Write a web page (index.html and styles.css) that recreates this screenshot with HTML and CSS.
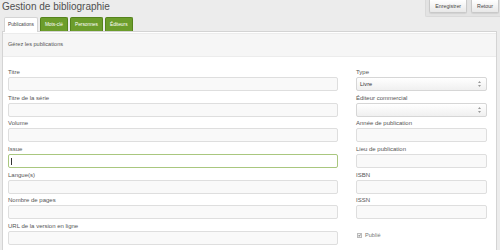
FILE: index.html
```
<!DOCTYPE html>
<html lang="fr">
<head>
    <meta charset="UTF-8">
    <title>Gestion de bibliographie</title>
    <link rel="stylesheet" href="styles.css">
</head>
<body>

    <div class="top-bar">
        <h1>Gestion de bibliographie</h1>
        <div class="actions">
            <button type="button" class="btn">Enregistrer</button>
            <button type="button" class="btn">Retour</button>
        </div>
    </div>

    <ul class="tabs">
        <li class="tab active">Publications</li>
        <li class="tab">Mots-clé</li>
        <li class="tab">Personnes</li>
        <li class="tab">Éditeurs</li>
    </ul>

    <div class="panel">
        <div class="panel-head">Gérez les publications</div>

        <form class="pub-form">
            <div class="col">
                <div class="field">
                    <label for="titre">Titre</label>
                    <input type="text" id="titre" class="form-control">
                </div>
                <div class="field">
                    <label for="serie">Titre de la série</label>
                    <input type="text" id="serie" class="form-control">
                </div>
                <div class="field">
                    <label for="volume">Volume</label>
                    <input type="text" id="volume" class="form-control">
                </div>
                <div class="field">
                    <label for="issue">Issue</label>
                    <div class="form-control focused"><span class="caret"></span></div>
                </div>
                <div class="field">
                    <label for="langues">Langue(s)</label>
                    <input type="text" id="langues" class="form-control">
                </div>
                <div class="field">
                    <label for="pages">Nombre de pages</label>
                    <input type="text" id="pages" class="form-control">
                </div>
                <div class="field">
                    <label for="url">URL de la version en ligne</label>
                    <input type="text" id="url" class="form-control">
                </div>
                <div class="field">
                    <label for="doi">DOI</label>
                    <input type="text" id="doi" class="form-control">
                </div>
            </div>

            <div class="col">
                <div class="field">
                    <label>Type</label>
                    <div class="select">
                        <span>Livre</span>
                        <svg class="arrows" width="3" height="6" viewBox="0 0 3 6"><path d="M1.5 0 L3 2 L0 2 Z M1.5 6 L3 4 L0 4 Z" fill="#999"/></svg>
                    </div>
                </div>
                <div class="field">
                    <label>Éditeur commercial</label>
                    <div class="select">
                        <span></span>
                        <svg class="arrows" width="3" height="6" viewBox="0 0 3 6"><path d="M1.5 0 L3 2 L0 2 Z M1.5 6 L3 4 L0 4 Z" fill="#999"/></svg>
                    </div>
                </div>
                <div class="field">
                    <label for="annee">Année de publication</label>
                    <input type="text" id="annee" class="form-control">
                </div>
                <div class="field">
                    <label for="lieu">Lieu de publication</label>
                    <input type="text" id="lieu" class="form-control">
                </div>
                <div class="field">
                    <label for="isbn">ISBN</label>
                    <input type="text" id="isbn" class="form-control">
                </div>
                <div class="field">
                    <label for="issn">ISSN</label>
                    <input type="text" id="issn" class="form-control">
                </div>
                <div class="field check">
                    <span class="box">
                        <svg width="5" height="5" viewBox="0 0 5 5"><path d="M0.8 2.6 L2 3.8 L4.3 0.9" stroke="#333" stroke-width="1.1" fill="none"/></svg>
                    </span>
                    <span>Publié</span>
                </div>
            </div>
        </form>
    </div>

</body>
</html>
```

FILE: styles.css
```
:root {
    --page-bg: #ececec;
    --border: #d4d4d4;
    --input-bg: #f9f9f9;
    --text: #555555;
    --green: #6c9d2b;
    --green-dark: #55831c;
}

body {
    margin: 0;
    background-color: var(--page-bg);
    font-family: "Liberation Sans", Arial, sans-serif;
    color: var(--text);
    height: 250px;
    overflow: hidden;
}

.top-bar {
    display: flex;
    justify-content: space-between;
    align-items: flex-start;
    height: 17px;
}

.top-bar h1 {
    margin: 0 0 0 2px;
    font-size: 10px;
    font-weight: normal;
    line-height: 14px;
    color: #505050;
}

.actions {
    display: flex;
    gap: 4px;
    padding: 0 1px 3px 3px;
    background-color: #e3e3e3;
    border-left: 1px solid #dadada;
    border-bottom: 1px solid #dadada;
    border-bottom-left-radius: 2px;
}

.btn {
    height: 13px;
    padding: 0 5px;
    font-family: inherit;
    font-size: 5.3px;
    color: #444;
    background: linear-gradient(#ffffff, #e8e8e8);
    border: 1px solid #c9c9c9;
    border-top: none;
    border-radius: 0 0 2px 2px;
    box-shadow: 0 1px 1px rgba(0, 0, 0, 0.08);
}

.tabs {
    display: flex;
    gap: 2px;
    margin: 0 0 -1px 4px;
    padding: 0;
    list-style: none;
    position: relative;
}

.tab {
    height: 13px;
    line-height: 13px;
    padding: 0 4px;
    font-size: 4.8px;
    color: #fff;
    background-color: var(--green);
    border: 1px solid var(--green-dark);
    border-bottom: none;
    border-radius: 2px 2px 0 0;
}

.tab.active {
    padding: 0 3px;
    color: #444;
    background-color: #fff;
    border-color: var(--border);
    height: 14px;
}

.panel {
    margin: 0 3px 0 2px;
    padding-top: 1px;
    background-color: #fff;
    border: 1px solid var(--border);
    height: 240px;
}

.panel-head {
    height: 22px;
    line-height: 21px;
    padding-left: 5px;
    font-size: 5.6px;
    color: #555;
    background-color: #f6f6f6;
    border-top: 1px solid #ececec;
    border-bottom: 1px solid #ececec;
}

.pub-form {
    display: grid;
    grid-template-columns: 330px 131px;
    column-gap: 18px;
    padding: 11px 0 0 5px;
}

.col {
    display: flex;
    flex-direction: column;
}

.field {
    margin-bottom: 2.7px;
}

.field label {
    display: block;
    height: 9px;
    line-height: 8px;
    font-size: 6px;
    color: #555;
}

.form-control {
    display: block;
    width: 100%;
    height: 14px;
    margin: 0;
    padding: 0 2px;
    box-sizing: border-box;
    font-family: inherit;
    font-size: 6px;
    background-color: var(--input-bg);
    border: 1px solid #dedede;
    border-radius: 2px;
}

.form-control.focused {
    background-color: #fff;
    border-color: #a9c77f;
    display: flex;
    align-items: center;
}

.caret {
    width: 1px;
    height: 7px;
    background-color: #333;
}

.select {
    display: flex;
    justify-content: space-between;
    align-items: center;
    height: 14px;
    padding: 0 5px 0 3px;
    box-sizing: border-box;
    font-size: 5.6px;
    color: #333;
    background: linear-gradient(#ffffff, #f0f0f0);
    border: 1px solid #d6d6d6;
    border-radius: 2px;
}

.field.check {
    display: flex;
    align-items: center;
    gap: 3px;
    padding: 10px 0 0 1px;
    font-size: 5.6px;
    color: #777;
}

.box {
    display: flex;
    width: 5px;
    height: 5px;
    background-color: #f4f4f4;
    border: 1px solid #bbb;
    box-sizing: border-box;
    overflow: visible;
}

.box svg {
    margin: -1px 0 0 0;
}
```
